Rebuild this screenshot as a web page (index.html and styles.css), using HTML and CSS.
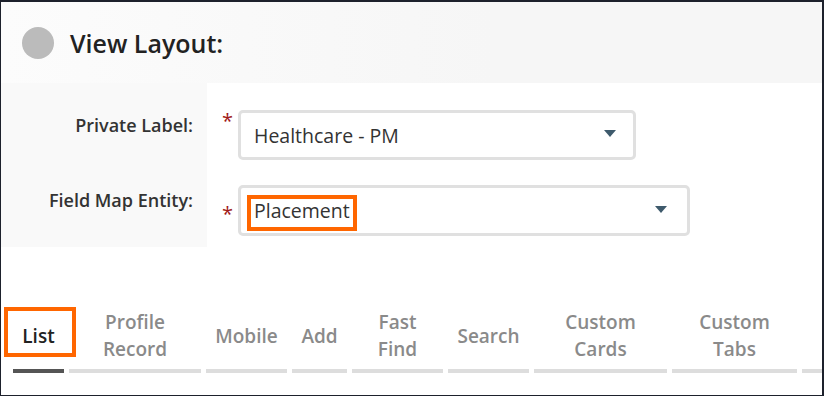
FILE: index.html
```html
<!DOCTYPE html>
<html>
<head>
<meta charset="utf-8">
<link rel="stylesheet" href="styles.css">
</head>
<body>
<div class="frame">
  <header class="header">
    <span class="dot"></span>
    <h1 class="title">View Layout:</h1>
  </header>
  <div class="form">
    <div class="label label-1">Private Label:</div>
    <div class="req req-1">*</div>
    <div class="field field-1">
      <div class="select select-1">
        <span class="value">Healthcare - PM</span>
        <span class="caret"></span>
      </div>
    </div>
    <div class="label label-2">Field Map Entity:</div>
    <div class="req req-2">*</div>
    <div class="field field-2">
      <div class="select select-2">
        <span class="value value-marked">Placement</span>
        <span class="caret"></span>
      </div>
    </div>
  </div>
  <ul class="tabs">
    <li class="tab tab-list active">List</li>
    <li class="tab tab-profile">Profile<br>Record</li>
    <li class="tab tab-mobile">Mobile</li>
    <li class="tab tab-add">Add</li>
    <li class="tab tab-fast">Fast<br>Find</li>
    <li class="tab tab-search">Search</li>
    <li class="tab tab-cards">Custom<br>Cards</li>
    <li class="tab tab-tabs">Custom<br>Tabs</li>
    <li class="tab tab-more"></li>
  </ul>
</div>
</body>
</html>
```

FILE: styles.css
```css
html, body {
  margin: 0;
  padding: 0;
  background: #ffffff;
}

.frame {
  box-sizing: border-box;
  width: 824px;
  height: 396px;
  border-top: 2px solid #1d212c;
  border-left: 1px solid #1d212c;
  border-right: 2px solid #1d212c;
  border-bottom: 1px solid #1d212c;
  font-family: "Open Sans", "Liberation Sans", sans-serif;
  overflow: hidden;
  background: #ffffff;
}

.header {
  height: 81px;
  display: flex;
  align-items: center;
  gap: 16px;
  padding-left: 21px;
  background: linear-gradient(to right, #fcfcfc, #f6f6f6 60%, #f6f6f6);
}

.dot {
  width: 32px;
  height: 32px;
  border-radius: 50%;
  background: #bbbbbb;
  flex-shrink: 0;
}

.title {
  margin: 0;
  font-size: 25px;
  font-weight: 600;
  color: #222222;
  line-height: 34px;
}

.form {
  display: grid;
  grid-template-columns: 206px 31px 1fr;
  grid-template-rows: 89px 75px;
}

.label {
  background: #f9f9f9;
  text-align: right;
  padding-right: 14px;
  font-size: 18px;
  font-weight: 600;
  color: #333333;
  line-height: 24px;
}

.label-1 { padding-top: 30px; }
.label-2 { padding-top: 16px; }

.req {
  color: #a01818;
  font-size: 20px;
  line-height: 20px;
  padding-left: 15px;
}

.req-1 { padding-top: 28px; }
.req-2 { padding-top: 32px; }

.field-1 { padding-top: 27px; }
.field-2 { padding-top: 13px; }

.select {
  box-sizing: border-box;
  display: flex;
  align-items: center;
  justify-content: space-between;
  border: 3px solid #e0e0e0;
  border-radius: 5px;
  background: #ffffff;
  padding-left: 13px;
}

.select-1 {
  width: 398px;
  height: 50px;
  padding-right: 17px;
}

.select-2 {
  width: 452px;
  height: 51px;
  padding-right: 20px;
}

.value {
  font-size: 19.5px;
  color: #333333;
}

.value-marked {
  position: relative;
}

.value-marked::after {
  content: "";
  position: absolute;
  left: -7px;
  right: -7px;
  top: -2px;
  bottom: -7px;
  border: 4px solid #ff6600;
}

.caret {
  width: 0;
  height: 0;
  border-left: 6px solid transparent;
  border-right: 6px solid transparent;
  border-top: 7px solid #3e5a6c;
  margin-bottom: 3px;
}

.tabs {
  list-style: none;
  margin: 58px 0 0 0;
  padding: 0 0 0 12px;
  display: flex;
  gap: 5px;
  overflow: hidden;
}

.tab {
  position: relative;
  flex-shrink: 0;
  box-sizing: border-box;
  height: 68px;
  padding-bottom: 2px;
  display: flex;
  align-items: center;
  justify-content: center;
  text-align: center;
  font-size: 19px;
  font-weight: 600;
  line-height: 27px;
  color: #8a8a8a;
  border-bottom: 4px solid #dddddd;
}

.tab.active {
  color: #222222;
  border-bottom-color: #555555;
}

.tab-list::after {
  content: "";
  position: absolute;
  left: -9px;
  top: 2px;
  width: 72px;
  height: 50px;
  box-sizing: border-box;
  border: 4px solid #ff6600;
}

.tab-list { width: 51px; }
.tab-profile { width: 132px; }
.tab-mobile { width: 81px; }
.tab-add { width: 55px; }
.tab-fast { width: 91px; }
.tab-search { width: 81px; }
.tab-cards { width: 133px; }
.tab-tabs { width: 125px; }
.tab-more { width: 100px; }
```
